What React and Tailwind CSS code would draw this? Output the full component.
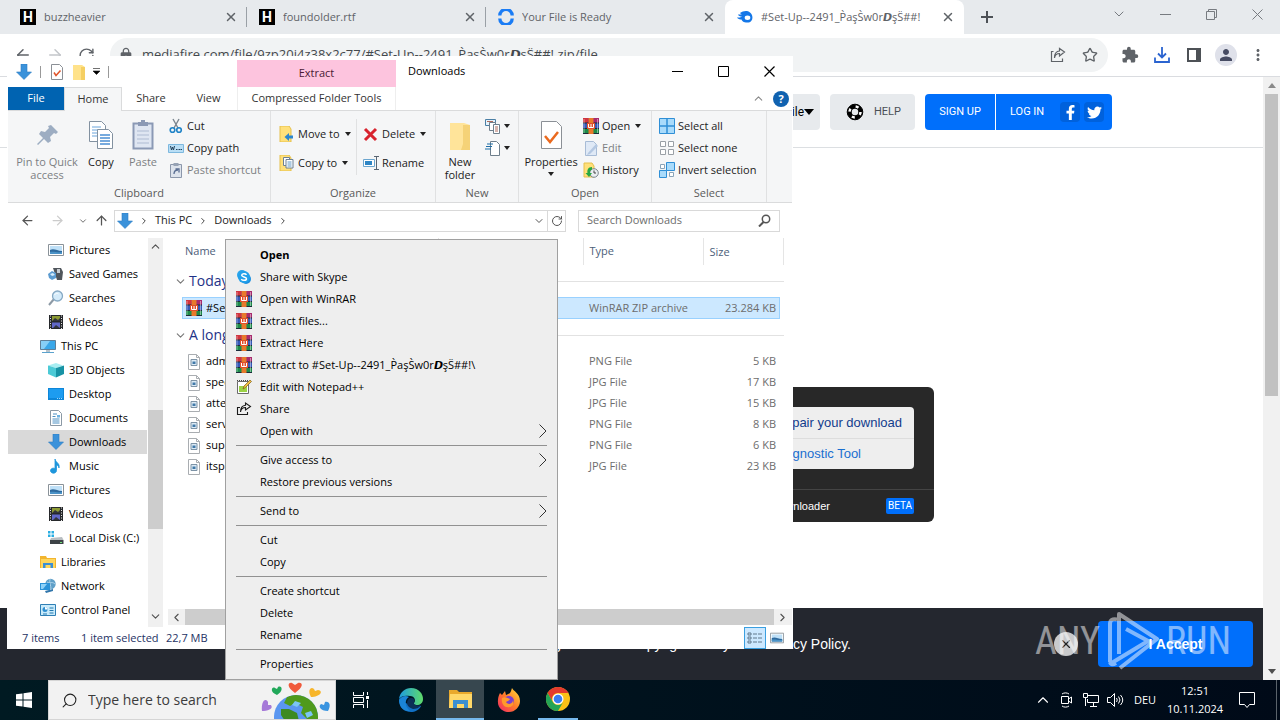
import {
  ArrowLeft,
  ArrowRight,
  ArrowUp,
  ChevronDown,
  ChevronLeft,
  ChevronRight,
  ChevronUp,
  RotateCw,
  Search,
  Star,
  X
} from "lucide-react"
import { FaFacebookF, FaTwitter } from "react-icons/fa"
import { MdExtension, MdLock, MdMoreVert, MdPerson } from "react-icons/md"

const ARCHIVE = "#Set-Up--2491_P̀aşS̀w0r𝘿şS̈##!"

const browserTabs = [
  { title: "buzzheavier", icon: "h" },
  { title: "foundolder.rtf", icon: "h" },
  { title: "Your File is Ready", icon: "ring" },
  { title: ARCHIVE, icon: "flame", active: true }
]

const navItems = [
  { label: "Pictures", icon: "picture", deep: true },
  { label: "Saved Games", icon: "games", deep: true },
  { label: "Searches", icon: "searches", deep: true },
  { label: "Videos", icon: "video", deep: true },
  { label: "This PC", icon: "pc" },
  { label: "3D Objects", icon: "cube", deep: true },
  { label: "Desktop", icon: "desktop", deep: true },
  { label: "Documents", icon: "document", deep: true },
  { label: "Downloads", icon: "download", deep: true, selected: true },
  { label: "Music", icon: "music", deep: true },
  { label: "Pictures", icon: "picture", deep: true },
  { label: "Videos", icon: "video", deep: true },
  { label: "Local Disk (C:)", icon: "disk", deep: true },
  { label: "Libraries", icon: "library" },
  { label: "Network", icon: "network" },
  { label: "Control Panel", icon: "panel" }
]

const oldFiles = [
  { name: "administrator.png", type: "PNG File", size: "5 KB" },
  { name: "specialnumbers.jpg", type: "JPG File", size: "17 KB" },
  { name: "attentionmade.jpg", type: "JPG File", size: "15 KB" },
  { name: "servicesterms.png", type: "PNG File", size: "8 KB" },
  { name: "supportlocal.png", type: "PNG File", size: "6 KB" },
  { name: "itspublic.jpg", type: "JPG File", size: "23 KB" }
]

const menuGroups = [
  [
    { label: "Open", bold: true },
    { label: "Share with Skype", icon: "skype" },
    { label: "Open with WinRAR", icon: "rar" },
    { label: "Extract files...", icon: "rar" },
    { label: "Extract Here", icon: "rar" },
    { label: `Extract to ${ARCHIVE}\\`, icon: "rar" },
    { label: "Edit with Notepad++", icon: "notepad" },
    { label: "Share", icon: "share" },
    { label: "Open with", sub: true }
  ],
  [{ label: "Give access to", sub: true }, { label: "Restore previous versions" }],
  [{ label: "Send to", sub: true }],
  [{ label: "Cut" }, { label: "Copy" }],
  [{ label: "Create shortcut" }, { label: "Delete" }, { label: "Rename" }],
  [{ label: "Properties" }]
]

// 16px artwork shared by the explorer window and the context menu
const art = {
  rar: (
    <>
      <path d="M0 0h16v5H0z" fill="#a82a6e" />
      <path d="M0 0h5v5H0z" fill="#d0343f" />
      <path d="M0 5h16v6H0z" fill="#3558b8" />
      <path d="M0 11h16v5H0z" fill="#1d8a4a" />
      <path d="M0 5h16M0 10.5h16M0 15.5h16" stroke="#1b2a3a" />
      <path d="M1 1v14M14.5 1v14" stroke="#fff" strokeOpacity=".45" />
      <path d="M5.5 0h5v16h-5z" fill="#e8792b" />
      <path d="M4 5h8v6H4z" fill="#e04f2a" />
      <path d="M5.5 6v3.500h5V6M8 6v3.500" stroke="#fff" fill="none" />
    </>
  ),
  skype: (
    <>
      <circle cx="6" cy="6" r="5" fill="#2aa5ec" />
      <circle cx="10" cy="10" r="5" fill="#1a8fe0" />
      <circle cx="8" cy="8" r="6" fill="#22a0ea" />
      <path d="M10.500 5.800C9.500 4.300 5.700 4.400 5.700 6.300c0 2 4.800 1.200 4.800 3.400 0 2-4 2.200-5.200.4" stroke="#fff" strokeWidth="1.500" fill="none" />
    </>
  ),
  notepad: (
    <>
      <path d="M1.500 2.500h11v12h-11z" fill="#fff" stroke="#6b6b6b" />
      <path d="M3 7h8v6H3z" fill="#9bd244" />
      <path d="M1 1.500h12" stroke="#444" strokeDasharray="1 1" />
      <path d="m7 10 1-3 6-6 1.500 1.500-6 6z" fill="#f0c040" stroke="#7a5a20" strokeWidth=".7" />
    </>
  ),
  share: <path d="M4 6.500H1.500v7h10V11M4.500 11c.5-3 2.500-4.500 5-4.500V9L14.500 5.500 9.500 2v2.200C6.500 4.500 4.500 7 4.500 11z" fill="none" stroke="#1a1a1a" strokeWidth="1.100" />,
  picture: (
    <>
      <path d="M.5 2.500h15v11H.5z" fill="#fff" stroke="#8a9299" />
      <path d="M2 4h12v8H2z" fill="#bfe0f7" />
      <path d="M2 8c4-2 7 1 12 1v3H2z" fill="#2e6a9e" />
      <path d="M2 10c4-1 7 1 12 0v2H2z" fill="#4b93c7" />
    </>
  ),
  games: (
    <>
      <path d="M5 2h8l2 4-1 8h-5L7 8z" fill="#50565c" />
      <path d="M9 3h3v4H9z" fill="#c7ccd1" />
      <path d="m0 8 4-3 4 2v5l-4 2-3-2z" fill="#5b9bd0" />
      <path d="m2 8 3-1 2 2-3 1z" fill="#d7ecfa" />
    </>
  ),
  searches: (
    <>
      <path d="m1 15 5-6" stroke="#8d9aa6" strokeWidth="2" />
      <circle cx="9.500" cy="6" r="5" fill="#d4ebfa" stroke="#86a9c4" strokeWidth="1.300" />
      <path d="M6.500 5c1-2 3-2 4-1" stroke="#fff" fill="none" />
    </>
  ),
  video: (
    <>
      <path d="M1 1h14v14H1z" fill="#26282b" />
      <path d="M4 2h8v5H4z" fill="#8d9b34" />
      <path d="M4 8.500h8V14H4z" fill="#6168c8" />
      <path d="m4 7 3-3 3 2 2-2v3zM5 14l3-3 4 3z" fill="#31343c" />
      <path d="M2.500 1.500v14M13.500 1.500v14" stroke="#e5e5e5" strokeDasharray="1 1.500" />
    </>
  ),
  pc: (
    <>
      <path d="M.5 2.500h15v9H.5z" fill="#3aa7e8" stroke="#5f7f97" />
      <path d="M1 3h9l-6 8H1z" fill="#86cff7" />
      <path d="M2 14.500h12" stroke="#5aa2cd" />
      <path d="M6 12h4v2H6z" fill="#b9c4cc" />
    </>
  ),
  cube: (
    <>
      <path d="m8 1 7 2.500L8 6 0 3.500z" fill="#a8eef2" />
      <path d="M0 3.500 8 6v9.500L0 12z" fill="#4ccad6" />
      <path d="m16 3.500-8 2.500v9.500l8-3.500z" fill="#1793a5" />
    </>
  ),
  desktop: (
    <>
      <path d="M0 2h16v12H0z" fill="#0d86d8" />
      <path d="M1 3h14v9H1z" fill="#1d9cf0" />
      <path d="M9 12.500h6" stroke="#9fd8ff" strokeDasharray="1 1" />
    </>
  ),
  document: (
    <>
      <path d="M2.500.5h8l3 3v12h-11z" fill="#fff" stroke="#8b99a5" />
      <path d="M5 4h4M4.500 6.500h3M4.500 9h7M4.500 11h7M4.500 13h7" stroke="#4a90c4" />
      <path d="M9 5h3v2.500H9z" fill="#6db3e2" />
    </>
  ),
  download: <path d="M5 0h6v8h4.500L8 15.500.5 8H5z" fill="#3b92da" stroke="#2b7dc4" strokeWidth=".6" />,
  music: <path d="M7 1c1 4 5 4 4 9-.5-2-1.500-3-2.500-3v5.500A3 2.500 0 1 1 7 10.500z" fill="#1e96dc" stroke="#1e96dc" strokeWidth=".8" />,
  disk: (
    <>
      <path d="M0 1h2.500v2.500H0zM3.500 1H6v2.500H3.500zM0 4.500h2.500V7H0zM3.500 4.500H6V7H3.500z" fill="#2aaee2" />
      <path d="m3 8 11-1 1.500 3H2z" fill="#b9bec2" />
      <path d="M2 10h13.500v4H2z" fill="#3d4246" />
      <path d="M12 12.500h2" stroke="#6fe07a" />
    </>
  ),
  library: (
    <>
      <path d="M0 2h6l1 2h9v10H0z" fill="#f2b52e" />
      <path d="M1 5h14v9H1z" fill="#ffd65c" />
      <path d="M3 9h10v5h-2.500v-3h-5v3H3z" fill="#3c8fd4" />
    </>
  ),
  network: (
    <>
      <circle cx="10.500" cy="6" r="5.200" fill="#5f9fc8" />
      <path d="M7 4c3 2 5-1 8 2M10 1c-1 4 1 6 1 10" stroke="#a9d0e8" fill="none" />
      <path d="M0 5h10v7H0z" fill="#2a92d8" />
      <path d="M1 6h6l-4 5H1z" fill="#8ed1f8" />
      <path d="m5 13 8-2v2l-7 2z" fill="#3176ab" />
    </>
  ),
  panel: (
    <>
      <path d="M.5 2.500h15v11H.5z" fill="#c9ebfb" stroke="#2f7fb5" />
      <circle cx="5" cy="7.500" r="2.500" fill="#2f8fd0" />
      <path d="M5 7.500V5a2.500 2.500 0 0 1 2.500 2.500z" fill="#fff" />
      <path d="M9.500 6h4M9.500 8.500h4M9.500 11h4M3 12h4" stroke="#2379b0" />
    </>
  ),
  imageFile: (
    <>
      <path d="M2.500.5h8l3 3v12h-11z" fill="#fff" stroke="#a9adb1" />
      <path d="M10.500.5v3h3" fill="none" stroke="#a9adb1" />
      <path d="M5 5.500h6v6H5z" fill="#dceaf5" stroke="#7d93a6" />
      <path d="M6.500 7.500h3v2.500h-3z" fill="#3f78a8" />
    </>
  ),
  cut: (
    <>
      <path d="M5 1l5 9M11 1 6 10" stroke="#7b868f" strokeWidth="1.400" />
      <circle cx="4.500" cy="12" r="2.300" fill="none" stroke="#1f83c7" strokeWidth="1.600" />
      <circle cx="11" cy="12" r="2.300" fill="none" stroke="#1f83c7" strokeWidth="1.600" />
    </>
  ),
  path: (
    <>
      <path d="M.5 4.500h15v8H.5z" fill="#b9def5" stroke="#7db8de" />
      <path d="m2.500 6 1 4 1-3 1 3 1-4M8 9.500h1.500M10.500 9.500H12M12.500 9.500H14" stroke="#23415a" fill="none" />
    </>
  ),
  shortcut: (
    <>
      <path d="M2.500 2.500h11v13h-11z" fill="#dde3ec" stroke="#8b97ab" />
      <path d="M5.500 1h5v3h-5z" fill="#97a3b5" />
      <path d="M6 12c0-3 1-4 4-4M7.500 7H11v3.500" stroke="#5b6f93" strokeWidth="1.300" fill="none" />
    </>
  ),
  moveTo: (
    <>
      <path d="M1 0h9l2 3v13H1z" fill="#ffe07a" stroke="#e5c04c" />
      <path d="M14 12.500H10V15l-4.500-4L10 7v2.500h4z" fill="#2b86cf" />
    </>
  ),
  copyTo: (
    <>
      <path d="M1 0h9l2 3v13H1z" fill="#ffe07a" stroke="#e5c04c" />
      <path d="M4.500 2.500h6v8h-6z" fill="#fff" stroke="#6c8094" />
      <path d="M7 4.500h7V13H7z" fill="#fff" stroke="#6c8094" />
      <path d="M8.500 7h4M8.500 9h4M8.500 11h4" stroke="#5d96c6" />
    </>
  ),
  remove: <path d="m2 3 11 11M13 3 2 14" stroke="#d8232e" strokeWidth="3" />,
  rename: (
    <>
      <path d="M.5 4.500h11v7H.5z" fill="#fff" stroke="#6ca6cf" />
      <path d="M2 6h7v4H2z" fill="#2f86c5" />
      <path d="M11 1.500h5M13.500 2v12M11 14.500h5" stroke="#596673" />
    </>
  ),
  newItem: (
    <>
      <path d="M.5 1.500h10v6H.5z" fill="#e6f3fb" stroke="#4b7fa5" />
      <path d="M4.500 4.500h6v8h-6z" fill="#fff" stroke="#6f7f8c" />
      <path d="M8.500 6.500h6v9h-6z" fill="#fff" stroke="#6f7f8c" />
      <path d="M10 9h3M10 11h3M10 13h3M2 3.500h6" stroke="#b06a5a" />
    </>
  ),
  easyAccess: (
    <>
      <path d="M5.500 1.500h6l3 3v11h-9z" fill="#fff" stroke="#6f7f8c" />
      <path d="M2 4h6M1 6.500h6M0 9h6" stroke="#1f6ea8" strokeWidth="1.200" />
    </>
  ),
  edit: (
    <>
      <path d="M2.500 1.500h8l3 3v11h-11z" fill="#dfe9f6" stroke="#a8bcd6" />
      <path d="m5 13 8-9 2 2-8 8-3 1z" fill="#b4c8e2" />
    </>
  ),
  history: (
    <>
      <path d="M1 1h8l2 3v11H1z" fill="#ffe07a" stroke="#e5c04c" />
      <circle cx="11" cy="11" r="4.300" fill="#e9edf0" stroke="#7c868e" />
      <path d="M11 8.500V11h2" stroke="#444" fill="none" />
      <path d="M9 5C5 5 4 8 4.500 11H2.500l3.500 4 3-4H7c0-2 .5-3 2-3.500z" fill="#27a844" />
    </>
  ),
  selectAll: (
    <>
      <path d="M.5.5h15v15H.5z" fill="#a9dbfb" stroke="#2f8fd6" />
      <path d="M8 0v16M0 8h16" stroke="#2f8fd6" strokeWidth="1.500" />
    </>
  ),
  selectNone: <path d="M1.500 1.500h5v5h-5zM9.500 1.500h5v5h-5zM1.500 9.500h5v5h-5zM9.500 9.500h5v5h-5z" fill="#fff" stroke="#9aa0a6" />,
  invert: (
    <>
      <path d="M1.500 2.500h4v4h-4zM10.500 10.500h4v4h-4z" fill="#fff" stroke="#8aa4b8" />
      <path d="M7.500.5h8v8h-8zM.5 8.500h7v7h-7z" fill="#a9dbfb" stroke="#2f8fd6" />
    </>
  ),
  props: (
    <>
      <path d="M2.500.5h8l3 3v12h-11z" fill="#fff" stroke="#8b9096" />
      <path d="m5 8.500 2 3 4.500-5" stroke="#e0542a" strokeWidth="1.500" fill="none" />
    </>
  ),
  folder: (
    <>
      <path d="M2 1h9l3 2v13H2z" fill="#ffe28a" />
      <path d="M10 3h4v13h-4z" fill="#f5cf62" />
    </>
  ),
  bigFolder: (
    <>
      <path d="M3 2h7l3 1v12.500H3z" fill="#ffe49a" />
      <path d="M9.500 3H13v12.500H8.500l1-3z" fill="#f5d277" />
    </>
  )
}

function Art({ name, size = 16 }) {
  return (
    <svg width={size} height={size} viewBox="0 0 16 16" className="shrink-0" aria-hidden="true">
      {art[name]}
    </svg>
  )
}

function Caret() {
  return (
    <svg width="6" height="4" viewBox="0 0 6 4" className="shrink-0" aria-hidden="true">
      <path d="M0 0h6L3 4z" fill="#222" />
    </svg>
  )
}

function Favicon({ name }) {
  if (name === "h") {
    return <span className="flex size-4 items-center justify-center bg-black font-['Roboto',sans-serif] text-sm leading-4 font-bold text-white">H</span>
  }
  if (name === "ring") {
    return (
      <svg width="16" height="16" viewBox="0 0 16 16" aria-hidden="true">
        <path d="M1.800 6.500a6.200 6.200 0 0 1 12.400 0M1.800 9.500a6.200 6.200 0 0 0 12.400 0" fill="none" stroke="#1a7cf5" strokeWidth="3.300" />
      </svg>
    )
  }
  return (
    <svg width="16" height="16" viewBox="0 0 16 16" aria-hidden="true">
      <path d="M3 4c3-2 7-3 10-.5 4 3 3 10-2.500 10C6 13.500 5 12 4.500 10.500c-2 0-3.500-.5-4.500-2 2 0 4 0 5-1C3 7.500 1.500 7 1 5.500c2 .3 3-.2 4-.5-1 0-1.500-.3-2-1z" fill="#1477e8" />
      <ellipse cx="10.500" cy="8.700" rx="2.800" ry="2.200" fill="#fff" />
    </svg>
  )
}

function BrowserTabs() {
  return (
    <div className="flex h-[34px] shrink-0 items-stretch bg-[#e7eaed] pl-2 text-[#5f6368]">
      {browserTabs.map((tab) => (
        <div
          key={tab.title}
          className={`flex w-[239px] items-center gap-2 pl-3 text-[11px] ${tab.active ? "rounded-t-lg bg-white" : ""}`}
        >
          <Favicon name={tab.icon} />
          <span className="flex-1 overflow-hidden leading-6 whitespace-nowrap">{tab.title}</span>
          <button type="button" aria-label={`Close ${tab.title}`}>
            <X size={14} strokeWidth={2.500} />
          </button>
          <span className={`h-5 w-px ${tab.icon === "h" ? "bg-[#9aa0a6]" : ""}`} />
        </div>
      ))}
      <button type="button" aria-label="New tab" className="ml-4 self-center">
        <svg width="14" height="14" viewBox="0 0 14 14"><path d="M7 1v12M1 7h12" stroke="#4d5156" strokeWidth="2" /></svg>
      </button>
      <div className="ml-auto flex items-start text-[#777b80]">
        <button type="button" aria-label="Search tabs" className="flex h-7 w-[46px] items-center justify-center"><ChevronDown size={16} strokeWidth={1.500} /></button>
        <button type="button" aria-label="Minimize" className="flex h-7 w-[46px] items-center justify-center">
          <svg width="11" height="11"><path d="M0 5.500h11" stroke="#777b80" /></svg>
        </button>
        <button type="button" aria-label="Restore" className="flex h-7 w-[46px] items-center justify-center">
          <svg width="11" height="11"><path d="M.5 2.500h8v8h-8zM2.500 2.500v-2h8v8h-2" fill="none" stroke="#777b80" /></svg>
        </button>
        <button type="button" aria-label="Close" className="flex h-7 w-[46px] items-center justify-center">
          <svg width="11" height="11"><path d="m.5.500 10 10M10.500.500l-10 10" stroke="#777b80" /></svg>
        </button>
      </div>
    </div>
  )
}

function BrowserToolbar() {
  return (
    <div className="flex h-[43px] shrink-0 items-center border-b border-[#dadce0] bg-white pr-1.5 pl-3.5 text-[#5f6368]">
      <button type="button" aria-label="Back" className="w-8"><ArrowLeft size={18} /></button>
      <button type="button" aria-label="Forward" className="w-8 text-[#c3c6ca]"><ArrowRight size={18} /></button>
      <button type="button" aria-label="Reload" className="w-8"><RotateCw size={17} /></button>
      <div className="flex h-[34px] flex-1 items-center gap-2 rounded-full bg-[#f1f3f4] pr-2.5 pl-2">
        <MdLock size={16} />
        <input
          aria-label="Address"
          className="min-w-0 flex-1 bg-transparent text-[13px] text-[#45494d] outline-none"
          defaultValue={`mediafire.com/file/9zp20i4z38x2c77/${ARCHIVE}.zip/file`}
        />
        <button type="button" aria-label="Share page" className="mr-2">
          <svg width="16" height="16" viewBox="0 0 16 16"><path d="M3.500 4.500h-2v10h11v-3M4.500 11c.5-3 2.500-4.500 5-4.500V9l5-4-5-3.500V4c-3 0-5.500 3-5 7z" fill="none" stroke="#5f6368" strokeWidth="1.200" /></svg>
        </button>
        <button type="button" aria-label="Bookmark"><Star size={16} /></button>
      </div>
      <div className="flex pl-1.5">
        <button type="button" aria-label="Extensions" className="flex w-8 items-center justify-center"><MdExtension size={18} /></button>
        <button type="button" aria-label="Downloads" className="flex w-8 items-center justify-center">
          <svg width="16" height="16" viewBox="0 0 16 16"><path d="M8 0v10M4 6.500l4 4 4-4M1 10.500V15h14v-4.500" fill="none" stroke="#2b64d0" strokeWidth="1.800" /></svg>
        </button>
        <button type="button" aria-label="Side panel" className="flex w-8 items-center justify-center">
          <svg width="14" height="14"><path d="M1 1h12v12H1z" fill="none" stroke="#4d5156" strokeWidth="2" /><path d="M9 1h4v12H9z" fill="#4d5156" /></svg>
        </button>
        <button type="button" aria-label="Profile" className="mx-[5px] flex size-[22px] items-center justify-center rounded-full bg-[#dfe1ea] text-[#474c63]"><MdPerson size={18} /></button>
        <button type="button" aria-label="Menu" className="flex w-8 items-center justify-center"><MdMoreVert size={18} /></button>
      </div>
    </div>
  )
}

function SiteHeader() {
  return (
    <header className="border-b border-[#dcdfe2] py-[17px] font-['Roboto',sans-serif] text-[11px]">
      <div className="mx-auto flex max-w-[961px] justify-end gap-2.5">
        <button type="button" className="flex h-9 w-24 items-center justify-end rounded-sm bg-[#e7eaed] pr-1.5 text-xs text-black">
          File
          <svg width="10" height="6"><path d="M0 0h10L5 6z" /></svg>
        </button>
        <a href="#help" className="flex h-9 w-[85px] items-center gap-2.5 rounded-sm bg-[#e7eaed] pl-4 text-[#4a4f55]">
          <svg width="18" height="18" viewBox="0 0 18 18" aria-hidden="true">
            <circle cx="9" cy="9" r="5.500" fill="none" stroke="#000" strokeWidth="4.500" />
            <circle cx="9" cy="9" r="5.500" fill="none" stroke="#fff" strokeWidth="2.500" strokeDasharray="3 5.640" />
            <circle cx="9" cy="9" r="7.800" fill="none" stroke="#000" />
          </svg>
          HELP
        </a>
        <div className="flex h-9 overflow-hidden rounded-sm bg-[#006ffb] text-white">
          <a href="#signup" className="flex w-[71px] items-center justify-center border-r border-white">SIGN UP</a>
          <a href="#login" className="flex w-16 items-center pl-3.5">LOG IN</a>
          <div className="flex items-center gap-1 pr-2">
            <button type="button" aria-label="Log in with Facebook" className="flex size-5 items-center justify-center rounded-sm bg-[#0061dc]"><FaFacebookF size={15} /></button>
            <button type="button" aria-label="Log in with Twitter" className="flex size-5 items-center justify-center rounded-sm bg-[#0061dc]"><FaTwitter size={15} /></button>
          </div>
        </div>
      </div>
    </header>
  )
}

function RepairCard() {
  return (
    <div className="mx-auto flex w-full max-w-[961px] justify-end pt-[239px] pr-[178px] font-['Liberation_Sans',sans-serif]">
      <div className="w-[300px] rounded-md bg-[#282828] pt-5">
        <div className="mx-5 flex flex-col overflow-hidden rounded bg-[#eee] text-right text-[13px]">
          <a href="#repair" className="h-[31px] pr-3 leading-[31px] text-[#123c8c]">Click to repair your download</a>
          <a href="#diagnostic" className="h-[31px] border-t border-[#ddd] pr-[53px] leading-[30px] text-[#1a6fd0]">Diagnostic Tool</a>
        </div>
        <div className="mt-5 flex h-[33px] items-center justify-between border-t border-[#444] px-5 text-[11px] text-white">
          <span className="w-44 text-right">MediaFire Downloader</span>
          <span className="w-7 rounded-xs bg-[#006ffb] text-center font-['Roboto',sans-serif] text-[10px] leading-4">BETA</span>
        </div>
      </div>
    </div>
  )
}

function Watermark() {
  return (
    <div className="pointer-events-none absolute right-8 bottom-2 flex h-[62px] items-center gap-1 font-['Liberation_Sans_Narrow','Roboto_Condensed','Roboto',sans-serif] text-[38px] leading-none text-white opacity-50">
      <span>ANY</span>
      <svg width="58" height="62" viewBox="0 0 58 62" aria-hidden="true">
        <path d="M6 52V14q0-6 7-4.500M15 44V4l38 25L16 58M22 19l24 13M6 54l38-23M6 52q1 4 6 1" fill="none" stroke="#fff" strokeWidth="4" strokeLinejoin="round" />
      </svg>
      <span>RUN</span>
    </div>
  )
}

function CookieBar() {
  return (
    <div className="relative flex h-[72px] shrink-0 items-center justify-end bg-[#24272f] pr-2.5 font-['Liberation_Sans',sans-serif] text-sm text-white">
      <p className="mr-[203px] whitespace-nowrap">
        This site uses cookies to improve your experience and to show relevant things. See our Copyright Policy and Privacy Policy.
      </p>
      <button type="button" aria-label="Dismiss" className="mr-5 flex size-6 items-center justify-center rounded-full bg-[#c9cacc] text-[#222]">
        <X size={14} />
      </button>
      <button type="button" className="h-[46px] w-[155px] rounded bg-[#006ffb] font-bold">I Accept</button>
      <Watermark />
    </div>
  )
}

function Browser() {
  return (
    <div className="flex min-h-0 flex-1 flex-col bg-white">
      <BrowserTabs />
      <BrowserToolbar />
      <div className="flex min-h-0 flex-1">
        <div className="flex min-w-0 flex-1 flex-col overflow-hidden">
          <SiteHeader />
          <main className="flex-1">
            <RepairCard />
          </main>
          <CookieBar />
        </div>
        <div className="flex w-[17px] flex-col items-center bg-[#f1f1f1]">
          <span className="flex h-[17px] items-center"><svg width="8" height="5"><path d="M0 5h8L4 0z" fill="#8a8a8a" /></svg></span>
          <span className="h-1/2 w-[13px] bg-[#c1c1c1]" />
          <span className="mt-auto flex h-[17px] items-center"><svg width="8" height="5"><path d="M0 0h8L4 5z" fill="#505050" /></svg></span>
        </div>
      </div>
    </div>
  )
}

function TitleBar() {
  return (
    <div className="flex h-[31px] shrink-0 items-center">
      <div className="flex w-[229px] items-center gap-1.5 pl-2">
        <Art name="download" />
        <span className="mx-0.5 h-3 w-px bg-[#999]" />
        <Art name="props" />
        <Art name="folder" />
        <svg width="7" height="7" aria-hidden="true"><path d="M0 .500h7M0 3h7L3.500 6.500z" stroke="#111" strokeWidth=".6" /></svg>
        <span className="ml-0.5 h-3 w-px bg-[#999]" />
      </div>
      <div className="flex h-[27px] w-[159px] items-center justify-center self-end bg-[#fdc4de] text-[#4a1a34]">Extract</div>
      <span className="pl-3 text-black">Downloads</span>
      <div className="ml-auto flex">
        <button type="button" aria-label="Minimize window" className="flex h-7 w-[46px] items-center justify-center"><svg width="11" height="11"><path d="M0 5.500h11" stroke="#000" /></svg></button>
        <button type="button" aria-label="Maximize window" className="flex h-7 w-[46px] items-center justify-center"><svg width="11" height="11"><path d="M.5.500h10v10H.500z" fill="none" stroke="#000" /></svg></button>
        <button type="button" aria-label="Close window" className="flex h-7 w-[46px] items-center justify-center"><svg width="11" height="11"><path d="m.5.500 10 10M10.500.500l-10 10" stroke="#000" strokeWidth="1.200" /></svg></button>
      </div>
    </div>
  )
}

function RibbonTabs() {
  return (
    <div className="flex h-6 shrink-0 border-b border-[#dadbdc] text-[#333]">
      <button type="button" className="w-14 bg-[#0063b1] text-white">File</button>
      <button type="button" className="-mb-px w-[58px] border border-b-0 border-[#dadbdc] bg-[#f5f6f7]">Home</button>
      <button type="button" className="w-[58px]">Share</button>
      <button type="button" className="w-[57px]">View</button>
      <button type="button" className="w-[159px] border-x border-[#eee]">Compressed Folder Tools</button>
      <div className="ml-auto flex items-center gap-2 pr-[3px]">
        <ChevronUp size={13} color="#888" />
        <button type="button" aria-label="Help" className="size-4 rounded-full bg-[#1062b0] leading-4 font-bold text-white">?</button>
      </div>
    </div>
  )
}

function BigButton({ label, className, children }) {
  return (
    <button type="button" className={`flex flex-col items-center pt-2 leading-[13px] ${className}`}>
      {children}
      <span className="mt-1">{label}</span>
    </button>
  )
}

function SmallButton({ icon, label, caret, muted }) {
  return (
    <button
      type="button"
      aria-label={label ? undefined : icon}
      className={`flex h-[22px] items-center gap-[3px] whitespace-nowrap ${muted ? "text-[#7c7f83]" : ""}`}
    >
      <Art name={icon} />
      {label && <span className="pr-0.5">{label}</span>}
      {caret && <Caret />}
    </button>
  )
}

function RibbonGroup({ label, className, children }) {
  return (
    <div className={`flex flex-col border-r border-[#e0e1e2] ${className}`}>
      <div className="flex h-[73px]">{children}</div>
      <div className="text-center leading-[18px] text-[#5a5a5a]">{label}</div>
    </div>
  )
}

function Ribbon() {
  return (
    <div className="flex h-[92px] shrink-0 border-b border-[#dadbdc] bg-[#f5f6f7] text-[#222]">
      <RibbonGroup label="Clipboard" className="w-[263px]">
        <BigButton label={<>Pin to Quick<br />access</>} className="ml-1 w-[70px] text-[#7c7f83]">
          <svg width="32" height="32" viewBox="0 0 32 32"><path d="m20 6 7 7-2 2-2-1-4 4 1 4-3 2-4-4-6 6-1-1 6-6-4-4 2-3 4 1 4-4-1-2z" fill="#9dadc2" /></svg>
        </BigButton>
        <BigButton label="Copy" className="w-[38px]">
          <svg width="32" height="32" viewBox="0 0 32 32">
            <path d="M4.500 2.500h12l4 4v16h-16z" fill="#fff" stroke="#8291a0" />
            <path d="M7 8h9M7 11h9M7 14h9M7 17h9" stroke="#6aa5dc" />
            <path d="M12.500 10.500h11l4 4v15h-15z" fill="#fff" stroke="#8291a0" />
            <path d="M15 16h10M15 19h10M15 22h10M15 25h10" stroke="#4a8fd4" strokeWidth="1.500" />
          </svg>
        </BigButton>
        <BigButton label="Paste" className="ml-0.5 w-[42px] text-[#7c7f83]">
          <svg width="32" height="32" viewBox="0 0 32 32">
            <path d="M6.500 4.500h19v25h-19z" fill="#dfe6f2" stroke="#8b99b5" strokeWidth="2" />
            <path d="M11 3h10v4H11zM14 1h4v3h-4z" fill="#8b99b5" />
            <path d="M10 12h12M10 16h12M10 20h12M10 24h12" stroke="#aebbd2" />
          </svg>
        </BigButton>
        <div className="ml-1 flex flex-col pt-1">
          <SmallButton icon="cut" label="Cut" />
          <SmallButton icon="path" label="Copy path" />
          <SmallButton icon="shortcut" label="Paste shortcut" muted />
        </div>
      </RibbonGroup>
      <RibbonGroup label="Organize" className="w-[165px]">
        <div className="flex w-[85px] flex-col gap-[7px] pt-3 pl-2">
          <SmallButton icon="moveTo" label="Move to" caret />
          <SmallButton icon="copyTo" label="Copy to" caret />
        </div>
        <div className="mt-2 flex h-14 flex-col gap-[7px] border-l border-[#e0e1e2] pt-1 pl-1.5">
          <SmallButton icon="remove" label="Delete" caret />
          <SmallButton icon="rename" label="Rename" />
        </div>
      </RibbonGroup>
      <RibbonGroup label="New" className="w-[83px]">
        <BigButton label={<>New<br />folder</>} className="ml-[3px] w-[42px]"><Art name="bigFolder" size={32} /></BigButton>
        <div className="ml-1 flex flex-col pt-1">
          <SmallButton icon="newItem" caret />
          <SmallButton icon="easyAccess" caret />
        </div>
      </RibbonGroup>
      <RibbonGroup label="Open" className="w-[133px]">
        <div className="flex w-16 flex-col items-center">
          <BigButton label="Properties" className="">
            <svg width="32" height="32" viewBox="0 0 32 32">
              <path d="M6.500 2.500h15l5 5v22h-20z" fill="#fff" stroke="#8b9096" />
              <path d="m10 17 5 6 8-10" fill="none" stroke="#ea6a1f" strokeWidth="2.500" />
            </svg>
          </BigButton>
          <span className="pt-1 leading-none"><Caret /></span>
        </div>
        <div className="flex flex-col pt-1">
          <SmallButton icon="rar" label="Open" caret />
          <SmallButton icon="edit" label="Edit" muted />
          <SmallButton icon="history" label="History" />
        </div>
      </RibbonGroup>
      <RibbonGroup label="Select" className="w-[115px]">
        <div className="flex flex-col pt-1 pl-[7px]">
          <SmallButton icon="selectAll" label="Select all" />
          <SmallButton icon="selectNone" label="Select none" />
          <SmallButton icon="invert" label="Invert selection" />
        </div>
      </RibbonGroup>
    </div>
  )
}

function AddressRow() {
  return (
    <div className="flex h-[35px] shrink-0 items-center pr-3 pl-3 text-[#555]">
      <button type="button" aria-label="Back" className="w-[30px]"><ArrowLeft size={15} /></button>
      <button type="button" aria-label="Forward" className="w-7 text-[#ccc]"><ArrowRight size={15} /></button>
      <button type="button" aria-label="Recent locations" className="w-4"><ChevronDown size={10} /></button>
      <button type="button" aria-label="Up" className="w-5"><ArrowUp size={15} /></button>
      <div className="flex h-[22px] w-[452px] items-center gap-1.5 border border-[#d9d9d9] pl-0.5 text-[#222]">
        <Art name="download" />
        <ChevronRight size={10} />
        <a href="#pc">This PC</a>
        <ChevronRight size={10} />
        <a href="#downloads">Downloads</a>
        <ChevronRight size={10} />
        <button type="button" aria-label="Previous locations" className="ml-auto"><ChevronDown size={12} color="#555" /></button>
        <button type="button" aria-label="Refresh" className="-ml-1 flex h-full w-[18px] items-center justify-center border-l border-[#d9d9d9]"><RotateCw size={12} color="#555" /></button>
      </div>
      <label className="ml-3 flex h-[22px] flex-1 items-center border border-[#d9d9d9] px-2">
        <input aria-label="Search Downloads" placeholder="Search Downloads" className="min-w-0 flex-1 outline-none placeholder:text-[#6d6d6d]" />
        <svg width="13" height="13" aria-hidden="true">
          <circle cx="8" cy="5" r="3.700" fill="none" stroke="#555" strokeWidth="1.500" />
          <path d="M5.500 8 1 12.500" stroke="#555" strokeWidth="2" />
        </svg>
      </label>
    </div>
  )
}

function NavPane() {
  return (
    <nav className="flex w-[156px] shrink-0">
      <ul className="w-[139px] text-black">
        {navItems.map((item, index) => (
          <li key={index}>
            <a
              href="#folder"
              className={`flex h-6 items-center gap-[5px] whitespace-nowrap ${item.deep ? "pl-10" : "pl-8"} ${item.selected ? "bg-[#d9d9d9]" : ""}`}
            >
              <Art name={item.icon} />
              {item.label}
            </a>
          </li>
        ))}
      </ul>
      <div className="ml-px flex w-[15px] flex-col items-center bg-[#f0f0f0] text-[#505050]">
        <ChevronUp size={13} className="mt-0.5" />
        <span className="mt-[157px] h-[119px] w-full bg-[#cdcdcd]" />
        <ChevronDown size={13} className="mt-auto mb-1" />
      </div>
    </nav>
  )
}

function GroupRow({ label }) {
  return (
    <tr className="h-8">
      <td colSpan={4} className="p-0">
        <div className="-mr-1 -ml-2 flex items-center gap-0.5 text-sm text-[#1e3287]">
          <ChevronDown size={13} color="#777" />
          {label}
          <span className="ml-1 h-px flex-1 bg-[#e2e2e2]" />
        </div>
      </td>
    </tr>
  )
}

function FileList() {
  return (
    <div className="flex min-w-0 flex-1 flex-col pl-1">
      <div className="flex-1 pr-3 pl-3.5">
        <table className="w-full table-fixed border-collapse text-[#6d6d6d]">
          <colgroup>
            <col className="w-64" />
            <col className="w-[145px]" />
            <col className="w-[120px]" />
            <col />
          </colgroup>
          <thead>
            <tr className="h-[27px] text-left text-[#4c607a]">
              <th className="border-r border-[#e5e5e5] py-0 pl-[3px] font-normal">Name</th>
              <th className="border-r border-[#e5e5e5] py-0 pl-1.5 font-normal">Date</th>
              <th className="border-r border-[#e5e5e5] py-0 pl-1.5 font-normal">Type</th>
              <th className="p-0 font-normal">
                <div className="-mr-1 border-r border-[#e5e5e5] pl-1.5 leading-[27px]">Size</div>
              </th>
            </tr>
          </thead>
          <tbody>
            <GroupRow label="Today (1)" />
            <tr className="h-[22px] bg-[#cce8ff] outline -outline-offset-1 outline-[#99d1ff]">
              <td className="py-0 pl-1 text-black">
                <div className="flex items-center gap-1"><Art name="rar" /><span className="truncate">{ARCHIVE}</span></div>
              </td>
              <td className="py-0 pl-1.5">10.11.2024</td>
              <td className="py-0 pl-1.5">WinRAR ZIP archive</td>
              <td className="py-0 pr-1 text-right">23.284 KB</td>
            </tr>
            <GroupRow label="A long time ago (6)" />
            {oldFiles.map((file) => (
              <tr key={file.name} className="h-[21px]">
                <td className="py-0 pl-1 text-black">
                  <div className="flex items-center gap-1"><Art name="imageFile" />{file.name}</div>
                </td>
                <td className="py-0 pl-1.5">12.05.2021</td>
                <td className="py-0 pl-1.5">{file.type}</td>
                <td className="py-0 pr-1 text-right">{file.size}</td>
              </tr>
            ))}
          </tbody>
        </table>
      </div>
      <div className="mb-0.5 flex h-4 items-center bg-[#f0f0f0] pr-px text-[#505050]">
        <ChevronLeft size={13} className="mx-0.5" />
        <span className="h-full flex-1 bg-[#cdcdcd]" />
        <ChevronRight size={13} className="mx-0.5" />
      </div>
    </div>
  )
}

function StatusBar() {
  return (
    <div className="flex h-[22px] shrink-0 items-center pl-3.5 text-[#1e3264]">
      <span className="w-[59px]">7 items</span>
      <span className="w-[85px]">1 item selected</span>
      <span>22,7 MB</span>
      <button type="button" aria-label="Details view" className="ml-auto flex h-[22px] w-[22px] items-center justify-center border border-[#3a9fe0] bg-[#cce8ff]">
        <svg width="16" height="14"><path d="M1 2h3v2H1zM1 6h3v2H1zM1 10h3v2H1z" fill="none" stroke="#60788c" /><path d="M6 3h4M11 3h4M6 7h4M11 7h4M6 11h4M11 11h4" stroke="#60788c" /></svg>
      </button>
      <button type="button" aria-label="Large icons" className="mr-2 ml-1"><Art name="picture" size={14} /></button>
    </div>
  )
}

function Explorer() {
  return (
    <section className="absolute top-14 left-[7px] flex h-[593px] w-[786px] flex-col bg-white pr-px pl-px text-[11px]">
      <TitleBar />
      <RibbonTabs />
      <Ribbon />
      <AddressRow />
      <div className="flex min-h-0 flex-1">
        <NavPane />
        <FileList />
      </div>
      <StatusBar />
    </section>
  )
}

function ContextMenu() {
  return (
    <div role="menu" className="absolute top-[239px] left-[225px] w-[333px] border border-[#a0a0a0] bg-[#eee] py-1 text-[11px] text-black">
      {menuGroups.map((group, index) => (
        <div key={index}>
          {index > 0 && <hr className="mx-2.5 my-[3px] border-[#919191]" />}
          {group.map((item) => (
            <button key={item.label} type="button" role="menuitem" className="flex h-[22px] w-full items-center pr-2.5 pl-2.5">
              <span className="w-6">{item.icon && <Art name={item.icon} />}</span>
              <span className={item.bold ? "font-bold" : ""}>{item.label}</span>
              {item.sub && (
                <svg width="8" height="14" className="ml-auto"><path d="m.5.500 6.500 6.500L.500 13.500" fill="none" stroke="#333" /></svg>
              )}
            </button>
          ))}
        </div>
      ))}
    </div>
  )
}

function Globe() {
  return (
    <svg width="74" height="38" viewBox="0 0 74 38" className="shrink-0 self-end" aria-hidden="true">
      <clipPath id="globe"><circle cx="35" cy="36" r="22" /></clipPath>
      <circle cx="35" cy="36" r="22" fill="#5a96f0" />
      <g clipPath="url(#globe)">
        <path d="M26 16c10-5 24-2 29 8l3 14H46l-6-6 2-6-8-4-5 3-6-3z" fill="#4f9a1c" />
        <path d="M20 28l8 0 8 4 2 8H24l-4-6z" fill="#3d8a22" />
        <path d="M34 20l6 2-4 4-5-2zM44 32l6-2 2 4-6 3z" fill="#7cc5f5" />
      </g>
      <g>
        <path d="M34 12c-9-6-7-11-3-10l3 2 3-2c5-1 6 4-3 10z" fill="#f05a3c" />
        <path d="M16 14c-8-3-5-9-2-7l2 1 1-2c4-2 6 4-1 8z" fill="#22a85a" />
        <path d="M50 16c-4-7 0-11 3-8l1 2 3-1c6 1 2 7-7 7z" fill="#f7b52a" />
        <path d="M1 30c-1-9 3-14 6-9v3l3 0c3 4-4 6-9 6z" fill="#a67ad8" />
        <path d="M67 30c-8 0-10-5-7-7l3 1 1-3c5-1 6 4 3 9z" fill="#3a94e0" />
      </g>
    </svg>
  )
}

function Taskbar() {
  return (
    <footer className="relative z-10 flex h-10 shrink-0 items-stretch bg-linear-to-r from-[#001a22] to-[#000a18] text-white">
      <button type="button" aria-label="Start" className="flex w-12 items-center justify-center">
        <svg width="16" height="16"><path d="M0 2.300 6.500 1.400V7.500H0zM7.500 1.200 16 0v7.500H7.500zM0 8.500h6.500v6.100L0 13.700zM7.500 8.500H16V16l-8.500-1.200z" fill="#fff" /></svg>
      </button>
      <label className="flex w-72 items-center gap-2.5 border border-[#d5d5d5] bg-[#f2f2f2] pl-3 text-[#222]">
        <Search size={17} strokeWidth={1.500} className="shrink-0 -scale-x-100" />
        <input aria-label="Search Windows" placeholder="Type here to search" className="w-full min-w-0 text-sm outline-none placeholder:text-[#3c3c3c]" />
        <Globe />
      </label>
      <button type="button" aria-label="Task view" className="flex w-[50px] items-center justify-center">
        <svg width="17" height="16"><path d="M.5 0v3.500h10V0M.500 5.500h10v5H.500zM.500 16v-3.500h10V16M14.500 0v3M14.500 8v8" fill="none" stroke="#fff" /><path d="M13 4h3v3h-3z" fill="#fff" /></svg>
      </button>
      <button type="button" aria-label="Edge" className="flex w-[50px] items-center justify-center">
        <svg width="24" height="24" viewBox="0 0 24 24">
          <defs><linearGradient id="edge" x1="0" x2="1" y2="0"><stop stopColor="#1d9be0" /><stop offset="1" stopColor="#5fdc6a" /></linearGradient></defs>
          <path d="M0 11C0 19 5 24 12 24c4 0 8-2 10-6H12z" fill="#1170c4" />
          <path d="M0 11C1 4 6 0 12 0c8 0 12 6 12 11 0 4-3 6-6 6-2 0-4-1-3-2 2-2 1-7-4-7-5-1-9 0-11 3z" fill="url(#edge)" />
          <path d="M0 12c2-4 7-5 10-3-4 2-5 9 1 14C4 24 0 18 0 12z" fill="#1b84d6" />
          <path d="M8 15c0-3 2-5 4-5 3 0 4 2 3 4-1 3 3 4 7 3-2 3-5 4-8 4-3-1-6-3-6-6z" fill="#0b2f57" />
        </svg>
      </button>
      <button type="button" aria-label="File Explorer" className="flex w-12 items-center justify-center border-b-2 border-[#76b9ed] bg-[#37474f]">
        <svg width="23" height="18"><path d="M0 0h8l2 2h13v16H0z" fill="#e9a92c" /><path d="M1 4h22v14H0z" fill="#ffd869" /><path d="M4 10h15v8h-4v-4H8v4H4z" fill="#3d8fd0" /></svg>
      </button>
      <button type="button" aria-label="Firefox" className="flex w-[49px] items-center justify-center">
        <svg width="24" height="24" viewBox="0 0 24 24">
          <defs><linearGradient id="fox" x1="1" y1="0" x2="0" y2="1"><stop stopColor="#ffe23a" /><stop offset=".5" stopColor="#ff7a2a" /><stop offset="1" stopColor="#f0246a" /></linearGradient></defs>
          <path d="M3 5l2 2 3-4 1 4c2-1 4-1 5-4l1-3c1 3 8 5 8 13 0 6-5 11-11 11S0 20 1 12c0-3 1-5 2-7z" fill="url(#fox)" />
          <circle cx="12" cy="13" r="5" fill="#7a3fd0" />
          <path d="M5 10c3-2 6 0 8 1-1 2-3 2-4 3 3 4 7 1 7-2 2 6-3 8-6 7-3 0-6-4-5-9z" fill="#ff9a2c" />
        </svg>
      </button>
      <button type="button" aria-label="Chrome" className="mx-[5px] flex w-10 items-center justify-center border-b-2 border-[#76b9ed]">
        <svg width="24" height="24" viewBox="0 0 24 24">
          <circle cx="12" cy="12" r="12" fill="#fbc116" />
          <path d="M1.600 6a12 12 0 0 1 20.800 0H12a6 6 0 0 0-5.200 9z" fill="#e33b2e" />
          <path d="M1.600 6A12 12 0 0 0 12 24l5.200-9A6 6 0 0 1 6.800 15z" fill="#23a455" />
          <circle cx="12" cy="12" r="5.500" fill="#fff" />
          <circle cx="12" cy="12" r="4.300" fill="#3a7df0" />
        </svg>
      </button>
      <div className="ml-auto flex items-center text-[11px]">
        <button type="button" aria-label="Hidden icons" className="flex w-6 justify-center"><ChevronUp size={18} strokeWidth={1.500} /></button>
        <button type="button" aria-label="Meet now" className="flex w-6 justify-center">
          <svg width="14" height="16"><path d="M1.500 4.500h7v7h-7zM8.500 7l3-2v6l-3-2M2 2c2-1.500 5-1.500 7 0M2 14c2 1.500 5 1.500 7 0" fill="none" stroke="#fff" /></svg>
        </button>
        <button type="button" aria-label="Network" className="flex w-6 justify-center">
          <svg width="16" height="14"><path d="M5 2.500h10.500v7H4.500V6M.500.500h4v4h-4zM2.500 4.500v8.500M7 13.500h7M10.500 10v3" fill="none" stroke="#fff" /></svg>
        </button>
        <button type="button" aria-label="Volume" className="flex w-6 justify-center">
          <svg width="17" height="14"><path d="M.5 4.500h3l4-4v13l-4-4h-3zM9.500 5q1.500 2 0 4M11.500 3.500q3 3.500 0 7M13.500 2q4.500 5 0 10" fill="none" stroke="#fff" /></svg>
        </button>
        <span className="w-9 text-center">DEU</span>
        <div className="w-16 text-center leading-[18px]">12:51<br />10.11.2024</div>
        <button type="button" aria-label="Notifications" className="flex w-10 justify-center">
          <svg width="16" height="17"><path d="M.5.500h15v12h-5L8 15.500 5.500 12.500h-5z" fill="none" stroke="#fff" /></svg>
        </button>
        <span className="ml-[9px] h-10 w-1 border-l border-[#5a636b]" />
      </div>
    </footer>
  )
}

export default function App() {
  return (
    <div className="relative flex h-screen flex-col overflow-hidden font-['Open_Sans','Noto_Sans',sans-serif]">
      <Browser />
      <Explorer />
      <ContextMenu />
      <Taskbar />
    </div>
  )
}
